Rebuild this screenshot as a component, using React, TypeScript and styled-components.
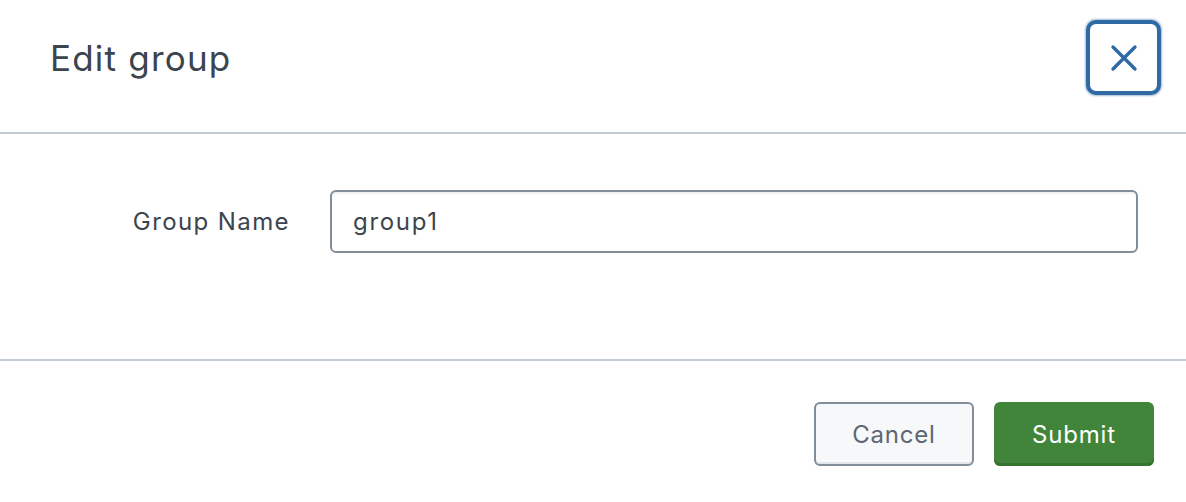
import styled, { createGlobalStyle } from 'styled-components';

const GlobalStyle = createGlobalStyle`
  html, body {
    margin: 0;
    padding: 0;
    background: #ffffff;
  }
  body {
    font-family: Inter, "Open Sans", "Liberation Sans", sans-serif;
    color: #3c444d;
  }
`;

// Modal shell

const Modal = styled.div`
  width: 1186px;
  height: 502px;
  display: flex;
  flex-direction: column;
  background: #ffffff;
`;

const Header = styled.header`
  box-sizing: border-box;
  height: 134px;
  padding: 21px 25px 38px 50px;
  display: flex;
  align-items: center;
  justify-content: space-between;
  border-bottom: 2px solid #c3cbd4;
`;

const Title = styled.h1`
  margin: 0;
  font-size: 35px;
  font-weight: 400;
  letter-spacing: 1.2px;
  color: #3c444d;
`;

const CloseButton = styled.button`
  box-sizing: border-box;
  width: 75px;
  height: 75px;
  display: flex;
  align-items: center;
  justify-content: center;
  background: #ffffff;
  border: 4px solid #2f6aa5;
  border-radius: 10px;
  box-shadow: 0 0 2px 1px rgba(47, 106, 165, 0.45);
  padding: 0;
  cursor: pointer;
`;

const Body = styled.section`
  box-sizing: border-box;
  height: 227px;
  padding-top: 56px;
  border-bottom: 2px solid #c3cbd4;
`;

const FieldRow = styled.div`
  display: grid;
  grid-template-columns: 290px 1fr;
  column-gap: 40px;
  align-items: center;
  padding-right: 48px;
`;

const Label = styled.label`
  text-align: right;
  font-size: 24px;
  letter-spacing: 1.4px;
  color: #3c444d;
`;

const TextInput = styled.input`
  box-sizing: border-box;
  width: 100%;
  height: 63px;
  padding: 0 21px;
  font-family: inherit;
  font-size: 24px;
  letter-spacing: 1.7px;
  color: #3c444d;
  background: #ffffff;
  border: 2px solid #818d99;
  border-radius: 6px;
  box-shadow: inset 0 3px 2px -1px rgba(0, 0, 0, 0.06);
  outline: none;
`;

const Footer = styled.footer`
  flex: 1;
  display: flex;
  justify-content: flex-end;
  gap: 20px;
  padding: 41px 32px 0 0;
  box-sizing: border-box;
`;

const Button = styled.button<{ $primary?: boolean }>`
  box-sizing: border-box;
  width: 160px;
  height: 64px;
  border-radius: 6px;
  font-family: inherit;
  font-size: 24px;
  letter-spacing: 0.8px;
  cursor: pointer;
  color: ${(p) => (p.$primary ? '#ffffff' : '#5c6773')};
  background: ${(p) => (p.$primary ? '#41853a' : '#f7f8fa')};
  border: ${(p) => (p.$primary ? 'none' : '2px solid #818d99')};
  box-shadow: ${(p) =>
    p.$primary ? 'inset 0 -3px 0 #377230' : 'inset 0 -2px 0 #e1e6eb'};
`;

const XIcon = () => (
  <svg width="28" height="28" viewBox="0 0 28 28" fill="none">
    <path
      d="M3 3 L25 25 M25 3 L3 25"
      stroke="#2f6aa5"
      strokeWidth="3.4"
      strokeLinecap="round"
    />
  </svg>
);

export default function App() {
  return (
    <>
      <GlobalStyle />
      <Modal>
        <Header>
          <Title>Edit group</Title>
          <CloseButton aria-label="Close">
            <XIcon />
          </CloseButton>
        </Header>
        <Body>
          <FieldRow>
            <Label htmlFor="group-name">Group Name</Label>
            <TextInput id="group-name" defaultValue="group1" />
          </FieldRow>
        </Body>
        <Footer>
          <Button>Cancel</Button>
          <Button $primary>Submit</Button>
        </Footer>
      </Modal>
    </>
  );
}
